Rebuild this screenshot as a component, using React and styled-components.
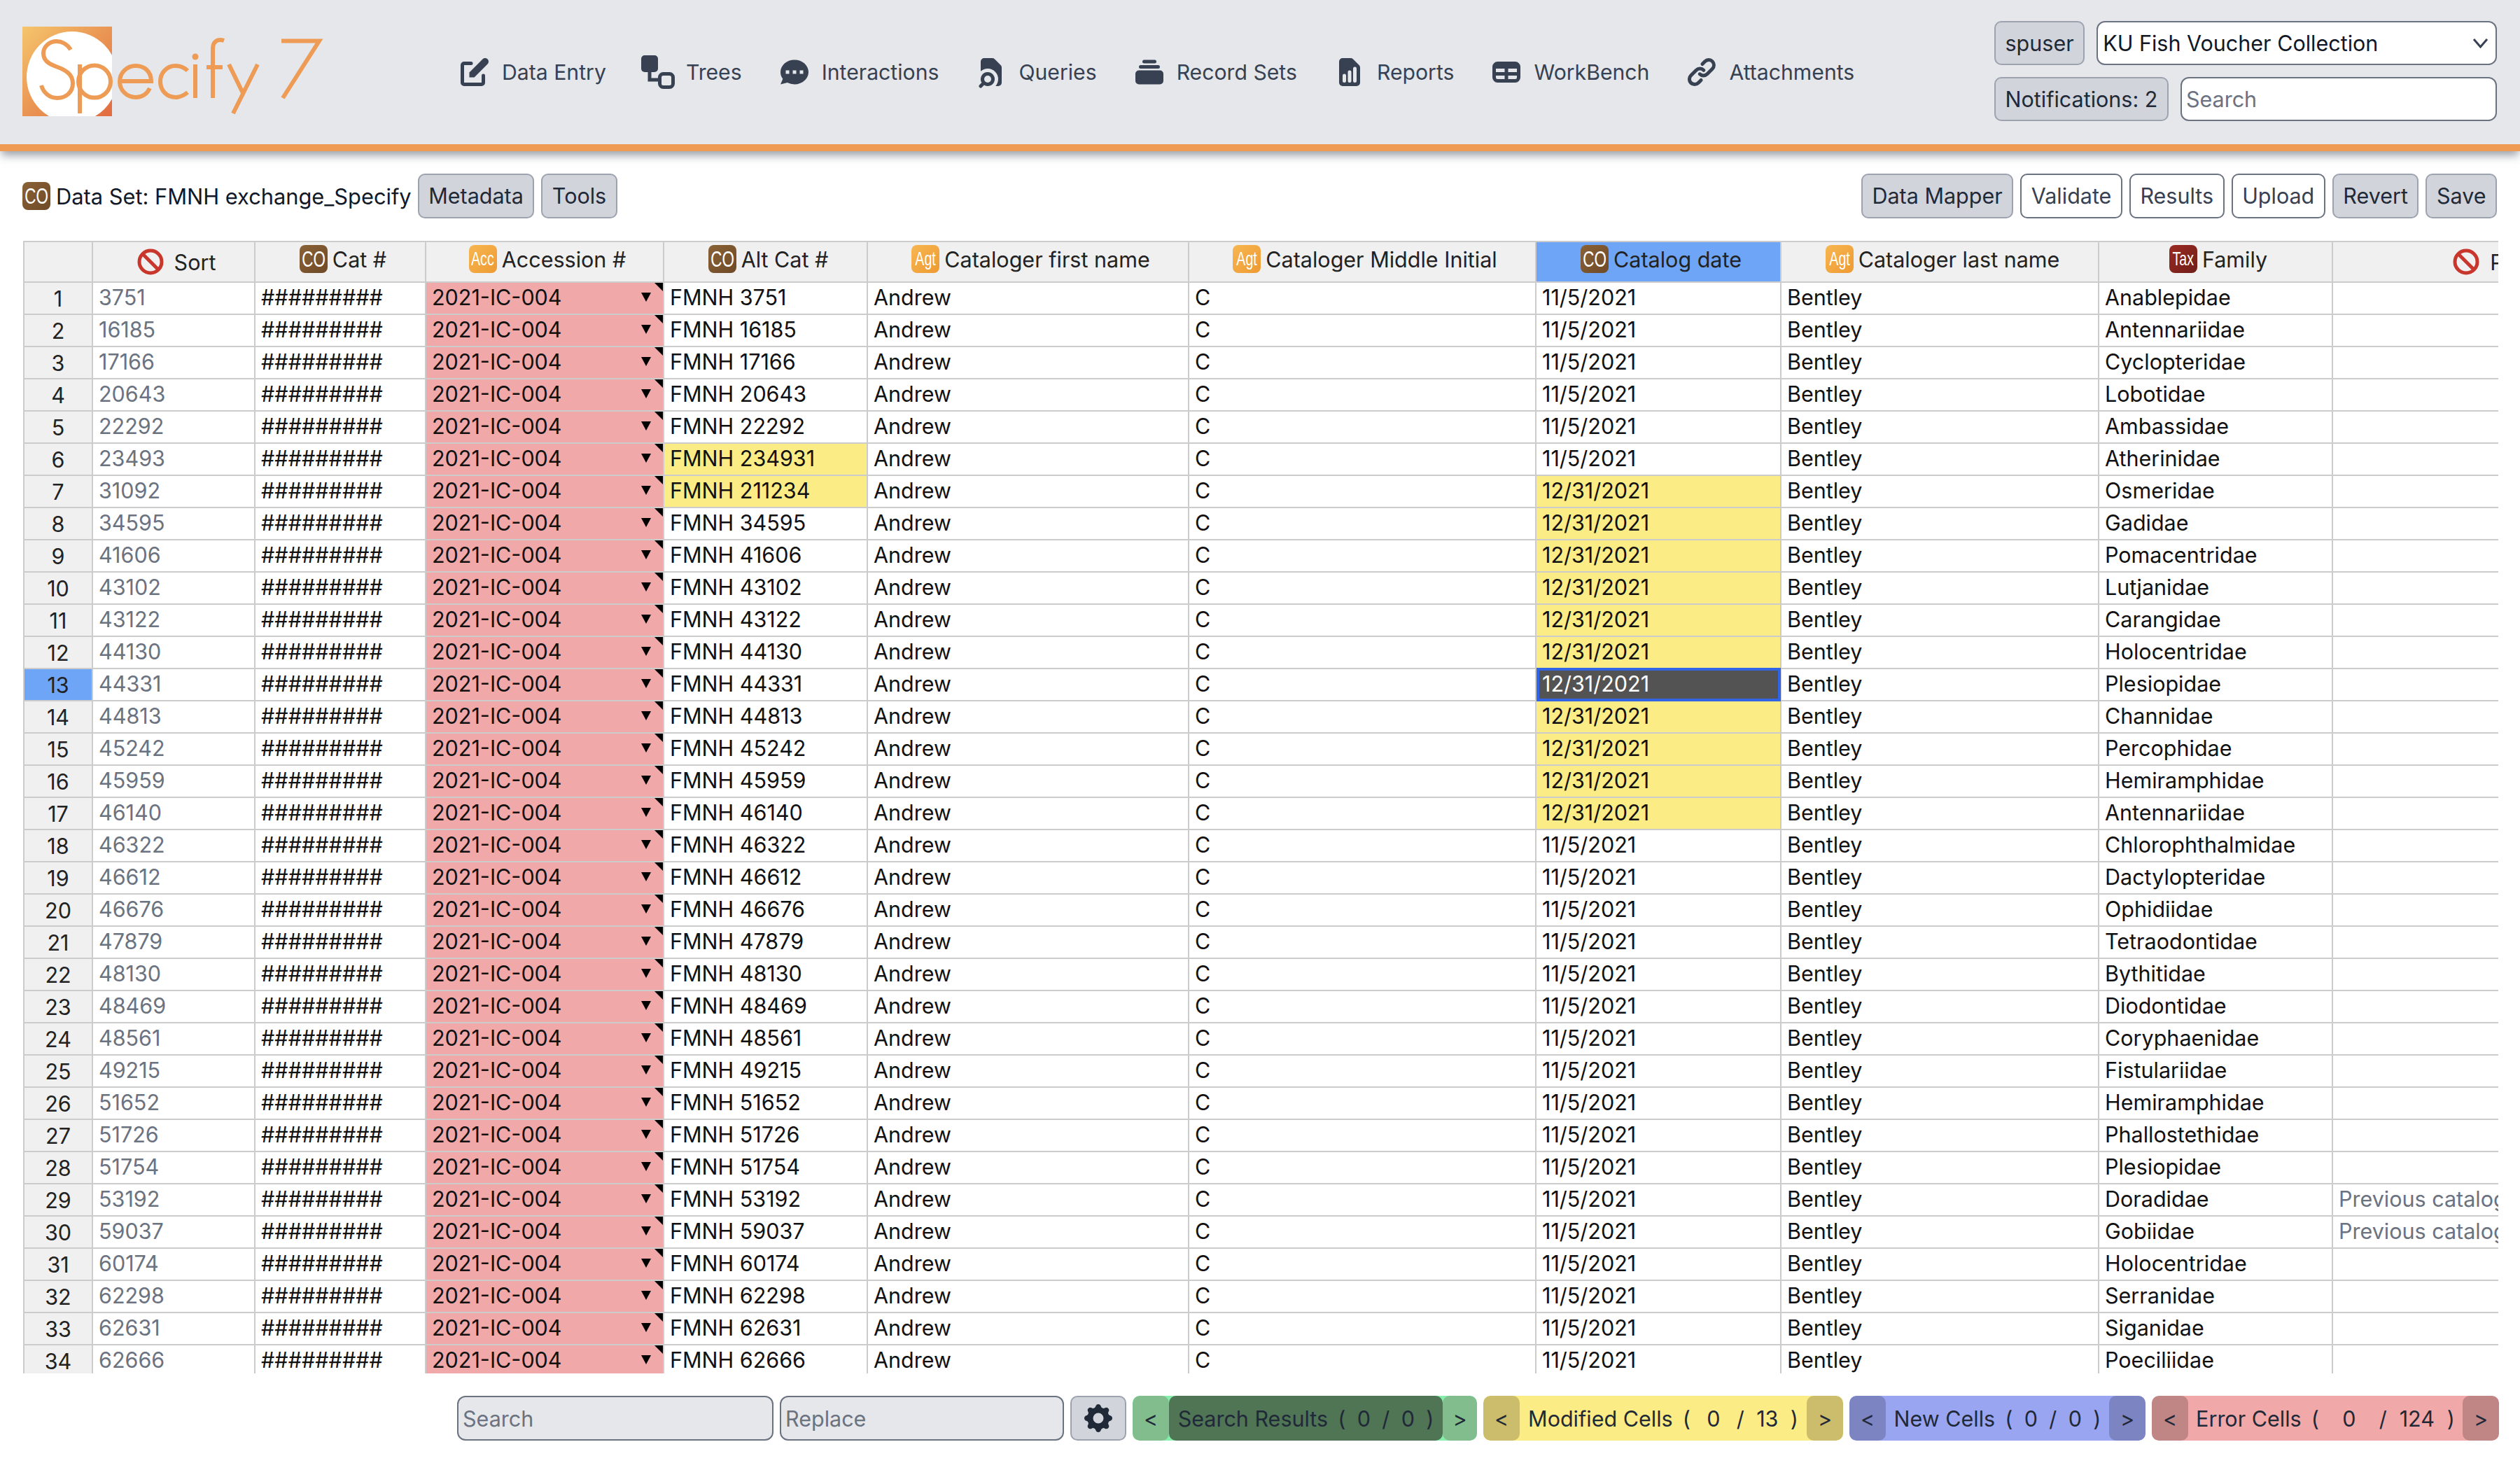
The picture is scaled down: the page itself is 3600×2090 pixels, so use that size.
import React from "react";
import styled, { createGlobalStyle } from "styled-components";

const FONT_SIZE = "30.5px";

const GlobalStyle = createGlobalStyle`
  html, body {
    margin: 0;
    padding: 0;
    background: #ffffff;
  }
  body {
    font-family: Inter, "Liberation Sans", sans-serif;
    font-size: ${FONT_SIZE};
    color: #111827;
  }
  * {
    box-sizing: border-box;
  }
`;

const Page = styled.div`
  width: 3600px;
  height: 2090px;
  display: flex;
  flex-direction: column;
  overflow: hidden;
`;

const Header = styled.header`
  position: relative;
  z-index: 2;
  flex: none;
  height: 216px;
  display: flex;
  align-items: center;
  padding: 0 33px 0 32px;
  background: #e5e7eb;
  border-bottom: 10px solid #f09b54;
  box-shadow: 0 8px 12px -2px rgba(55, 65, 81, 0.5);
`;

const Logo = styled.svg`
  flex: none;
  width: 440px;
  height: 128px;
  margin-top: -2px;
`;

const Nav = styled.nav`
  display: flex;
  align-items: center;
  gap: 50px;
  margin-left: 181px;
`;

const NavItem = styled.a`
  display: flex;
  align-items: center;
  gap: 14px;
  color: #374151;
  font-size: 30.2px;
  line-height: 44px;
  white-space: nowrap;

  svg {
    flex: none;
    width: 50px;
    height: 50px;
    fill: currentColor;
  }
`;

const UserBox = styled.div`
  flex: none;
  margin-left: auto;
  margin-top: -3px;
  width: 718px;
  display: flex;
  flex-direction: column;
  gap: 17px;
`;

const UserRow = styled.div`
  display: flex;
  gap: 17px;
  height: 63px;
`;

const Button = styled.button`
  flex: none;
  height: ${(p) => p.$height || 64}px;
  padding: 0 ${(p) => p.$pad || 13.5}px;
  border-radius: 10px;
  border: 2px solid ${(p) => (p.$outline ? "#6b7280" : "#9ca3af")};
  background: ${(p) => (p.$outline ? "#ffffff" : "#d1d5db")};
  color: ${(p) => (p.$outline ? "#374151" : "#1f2937")};
  font-family: inherit;
  font-size: ${FONT_SIZE};
  line-height: 40px;
  white-space: nowrap;
`;

const FakeSelect = styled.div`
  flex: 1;
  min-width: 0;
  display: flex;
  align-items: center;
  justify-content: space-between;
  padding: 0 10px 0 7px;
  background: #ffffff;
  border: 2px solid #6b7280;
  border-radius: 12px;
  color: #111827;
`;

const TextInput = styled.input`
  flex: ${(p) => (p.$width ? "none" : 1)};
  width: ${(p) => (p.$width ? `${p.$width}px` : 0)};
  min-width: 0;
  height: ${(p) => p.$height || 63}px;
  padding: 0 6px;
  font-family: inherit;
  font-size: ${FONT_SIZE};
  border: 2px solid #6b7280;
  border-radius: 12px;
  background: ${(p) => p.$bg || "#ffffff"};
  color: #111827;

  &::placeholder {
    color: #6b7280;
    opacity: 1;
  }
`;

const Toolbar = styled.div`
  flex: none;
  display: flex;
  align-items: center;
  gap: 10px;
  height: 64px;
  margin: 32px 33px 32px 32px;
`;

const Title = styled.h2`
  display: flex;
  align-items: center;
  gap: 8px;
  margin: 0 -1px 0 0;
  font-size: 30.8px;
  font-weight: 400;
  white-space: nowrap;
`;

const BadgeBox = styled.span`
  flex: none;
  display: inline-flex;
  align-items: center;
  justify-content: center;
  width: 40px;
  height: 40px;
  border-radius: 8px;
  overflow: hidden;
  background: ${(p) => p.$bg};
`;

const BadgeText = styled.span`
  display: inline-block;
  color: #ffffff;
  font-family: "Liberation Sans", sans-serif;
  font-size: ${(p) => p.$size}px;
  line-height: 1;
  transform: scaleX(0.7);
`;

const Spacer = styled.div`
  flex: 1;
`;

const Grid = styled.div`
  flex: none;
  height: 1618px;
  margin: 0 31px 0 33px;
  overflow: hidden;
  border-top: 2px solid #cccccc;
  border-left: 2px solid #cccccc;
`;

const COLUMNS = "98px 232px 244px 340px 291px 459px 496px 350px 454px 334px 514px";

const HeadRow = styled.div`
  display: grid;
  grid-template-columns: ${COLUMNS};
  width: max-content;
  height: 58px;
  border-bottom: 2px solid #cccccc;
`;

const Row = styled.div`
  display: grid;
  grid-template-columns: ${COLUMNS};
  width: max-content;
  height: 46px;
  border-bottom: 2px solid #cccccc;
`;

const HeadCell = styled.div`
  display: flex;
  align-items: center;
  justify-content: center;
  gap: ${(p) => (p.$plain ? 15 : 7)}px;
  padding: ${(p) => (p.$plain ? "0 0 0 8px" : "0 0 8px 8px")};
  background: ${(p) => (p.$active ? "#6fa5f6" : "#f0f0f0")};
  border-right: 2px solid #cccccc;
  color: #222222;
  font-size: ${FONT_SIZE};
  white-space: nowrap;
  overflow: hidden;
`;

const RowHead = styled.div`
  display: flex;
  align-items: center;
  justify-content: center;
  background: ${(p) => (p.$active ? "#6fa5f6" : "#f0f0f0")};
  border-right: 2px solid #cccccc;
  color: #222222;
  font-size: ${FONT_SIZE};
`;

const CELL_BG = {
  error: "#f1a8a8",
  modified: "#fbec85",
  selected: "#535353",
};

const Cell = styled.div`
  position: relative;
  padding: 0 8px;
  background: ${(p) => CELL_BG[p.$state] || "#ffffff"};
  border-right: 2px solid #cccccc;
  color: ${(p) =>
    p.$state === "selected" ? "#ffffff" : p.$muted ? "#6b7280" : "#111111"};
  font-size: ${FONT_SIZE};
  line-height: 42px;
  white-space: nowrap;
  overflow: ${(p) => (p.$state === "selected" ? "visible" : "hidden")};
`;

const SelectionFrame = styled.span`
  position: absolute;
  top: -2px;
  right: -1px;
  bottom: -2px;
  left: 0;
  border: 4px solid #3264e6;
`;

const CommentMark = styled.span`
  position: absolute;
  top: 0;
  right: 0;
  border-top: 12px solid #000000;
  border-left: 12px solid transparent;
`;

const ComboArrow = styled.span`
  position: absolute;
  top: 14px;
  right: 17px;
  border-top: 13px solid #000000;
  border-left: 7px solid transparent;
  border-right: 7px solid transparent;
`;

const Footer = styled.div`
  flex: none;
  display: flex;
  align-items: stretch;
  gap: 9px;
  height: 64px;
  margin: 32px 31px 0 653px;
`;

const IconButton = styled.button`
  flex: none;
  width: 80px;
  display: flex;
  align-items: center;
  justify-content: center;
  padding: 0;
  background: #d1d5db;
  border: 2px solid #9ca3af;
  border-radius: 10px;
  color: #1f2937;

  svg {
    width: 50px;
    height: 50px;
    fill: currentColor;
  }
`;

const NAV_PALETTE = {
  green: { peek: "#86efac", side: "#82be8d", mid: "#507555" },
  yellow: { peek: "#fbec85", side: "#cbbd6b", mid: "#fbec85" },
  blue: { peek: "#9aa5f2", side: "#7c84c1", mid: "#9aa5f2" },
  red: { peek: "#f1a8a8", side: "#c08585", mid: "#f1a8a8" },
};

const Navigator = styled.div`
  flex: none;
  width: ${(p) => p.$width}px;
  display: flex;
  border-radius: 10px;
  overflow: hidden;
  background: ${(p) => NAV_PALETTE[p.$tone].peek};
`;

const NavArrow = styled.button`
  flex: none;
  width: ${(p) => p.$width || 52}px;
  padding: 0;
  border: none;
  border-radius: 10px;
  background: ${(p) => NAV_PALETTE[p.$tone].side};
  color: #1f2937;
  font-family: inherit;
  font-size: ${FONT_SIZE};
`;

const NavLabel = styled.div`
  flex: 1;
  display: flex;
  align-items: center;
  justify-content: center;
  border-radius: 10px;
  background: ${(p) => NAV_PALETTE[p.$tone].mid};
  color: #1f2937;
  font-size: ${FONT_SIZE};
  white-space: nowrap;
`;

const LabelText = styled.span`
  margin-right: 14px;
`;

const Count = styled.span`
  display: inline-block;
  width: ${(p) => p.$width}px;
  text-align: center;
`;

const Badge = ({ bg, children }) => (
  <BadgeBox $bg={bg}>
    <BadgeText $size={children === "CO" ? 32 : 28}>{children}</BadgeText>
  </BadgeBox>
);

const NoSign = () => (
  <svg width="38" height="38" viewBox="0 0 38 38" fill="none" stroke="#c9362b" strokeWidth="5">
    <circle cx="19" cy="19" r="16" />
    <line x1="8" y1="8" x2="30" y2="30" />
  </svg>
);

const SearchCounter = ({ tone, width, left, right, label, current, total, countWidth }) => (
  <Navigator $tone={tone} $width={width}>
    <NavArrow $tone={tone} $width={left}>&lt;</NavArrow>
    <NavLabel $tone={tone}>
      <LabelText>{label}</LabelText>(<Count $width={countWidth}>{current}</Count>/
      <Count $width={countWidth}>{total}</Count>)
    </NavLabel>
    <NavArrow $tone={tone} $width={right}>&gt;</NavArrow>
  </Navigator>
);

const BROWN = "linear-gradient(135deg, #8a6236, #6f4a28)";
const ORANGE = "linear-gradient(135deg, #f7b650, #ee9a33)";
const DARK_RED = "linear-gradient(135deg, #9b2a22, #6f1d19)";

const TABLES = {
  CO: BROWN,
  Acc: ORANGE,
  Agt: ORANGE,
  Tax: DARK_RED,
};

const HEADERS = [
  { badge: "CO", label: "Cat #" },
  { badge: "Acc", label: "Accession #" },
  { badge: "CO", label: "Alt Cat #" },
  { badge: "Agt", label: "Cataloger first name" },
  { badge: "Agt", label: "Cataloger Middle Initial" },
  { badge: "CO", label: "Catalog date", active: true },
  { badge: "Agt", label: "Cataloger last name" },
  { badge: "Tax", label: "Family" },
];

const RECORDS = [
  [3751, "Anablepidae"],
  [16185, "Antennariidae"],
  [17166, "Cyclopteridae"],
  [20643, "Lobotidae"],
  [22292, "Ambassidae"],
  [23493, "Atherinidae", "FMNH 234931"],
  [31092, "Osmeridae", "FMNH 211234"],
  [34595, "Gadidae"],
  [41606, "Pomacentridae"],
  [43102, "Lutjanidae"],
  [43122, "Carangidae"],
  [44130, "Holocentridae"],
  [44331, "Plesiopidae"],
  [44813, "Channidae"],
  [45242, "Percophidae"],
  [45959, "Hemiramphidae"],
  [46140, "Antennariidae"],
  [46322, "Chlorophthalmidae"],
  [46612, "Dactylopteridae"],
  [46676, "Ophidiidae"],
  [47879, "Tetraodontidae"],
  [48130, "Bythitidae"],
  [48469, "Diodontidae"],
  [48561, "Coryphaenidae"],
  [49215, "Fistulariidae"],
  [51652, "Hemiramphidae"],
  [51726, "Phallostethidae"],
  [51754, "Plesiopidae"],
  [53192, "Doradidae"],
  [59037, "Gobiidae"],
  [60174, "Holocentridae"],
  [62298, "Serranidae"],
  [62631, "Siganidae"],
  [62666, "Poeciliidae"],
];

const App = () => {
  return (
    <Page>
      <GlobalStyle />
      <Header>
        <Logo viewBox="0 0 440 128">
          <defs>
            <linearGradient id="logoBg" x1="0" y1="0" x2="1" y2="1">
              <stop offset="0" stopColor="#f5c56c" />
              <stop offset="0.5" stopColor="#ea9553" />
              <stop offset="1" stopColor="#e26b41" />
            </linearGradient>
            <clipPath id="logoSquare">
              <rect width="128" height="128" />
            </clipPath>
          </defs>
          <rect width="128" height="128" fill="url(#logoBg)" />
          <circle cx="71" cy="72" r="65" fill="#fff" clipPath="url(#logoSquare)" />
          <g fill="none" stroke="#ee9b55" strokeWidth="6">
            <path d="M69 33C64 25 56 21 49 21C38 21 30 29 30 38C30 48 37 53 48 57C62 62 72 68 72 81C72 94 62 102 50 102C38 102 30 94 27 84" />
            <path d="M82 54V124" />
            <circle cx="103" cy="78.5" r="23" />
            <path d="M139 78H184C184 64 174 56 162 56C149 56 139 66 139 78.5C139 91 149 101 162 101C171 101 178 96 182 88" />
            <path d="M236 63C231 58 226 56 219 56C206 56 197 66 197 78.5C197 91 206 101 219 101C226 101 231 98 236 94" />
            <path d="M247 54V102" />
            <path d="M272 102V32C272 21 279 17 288 20" />
            <path d="M263 58H286" />
            <path d="M295 54L316 97M336 54L301 124" />
            <path d="M370 20.5H424L372 102" />
          </g>
          <circle cx="247" cy="43" r="4.5" fill="#ee9b55" />
        </Logo>
        <Nav>
          <NavItem>
            <svg viewBox="0 0 20 20">
              <path d="M17.414 2.586a2 2 0 00-2.828 0L7 10.172V13h2.828l7.586-7.586a2 2 0 000-2.828z" />
              <path fillRule="evenodd" d="M2 6a2 2 0 012-2h4a1 1 0 010 2H4v10h10v-4a1 1 0 112 0v4a2 2 0 01-2 2H4a2 2 0 01-2-2V6z" />
            </svg>
            Data Entry
          </NavItem>
          <NavItem>
            <svg viewBox="0 0 50 50">
              <rect x="0" y="1" width="24" height="24" rx="5" />
              <path d="M12 25V36H24" fill="none" stroke="currentColor" strokeWidth="5" />
              <rect x="26.5" y="27.5" width="19" height="19" rx="5" fill="none" stroke="currentColor" strokeWidth="5" />
            </svg>
            Trees
          </NavItem>
          <NavItem>
            <svg viewBox="0 0 20 20">
              <path fillRule="evenodd" d="M18 10c0 3.866-3.582 7-8 7a8.841 8.841 0 01-4.083-.98L2 17l1.338-3.123C2.493 12.767 2 11.434 2 10c0-3.866 3.582-7 8-7s8 3.134 8 7zM7 9H5v2h2V9zm8 0h-2v2h2V9zM9 9h2v2H9V9z" />
            </svg>
            Interactions
          </NavItem>
          <NavItem>
            <svg viewBox="0 0 20 20">
              <path d="M4 4a2 2 0 012-2h4.586A2 2 0 0112 2.586L15.414 6A2 2 0 0116 7.414V16a2 2 0 01-2 2h-1.528A6 6 0 004 9.528V4z" />
              <path fillRule="evenodd" d="M8 10a4 4 0 00-3.446 6.032l-1.261 1.26a1 1 0 101.414 1.415l1.261-1.261A4 4 0 108 10zm-2 4a2 2 0 114 0 2 2 0 01-4 0z" />
            </svg>
            Queries
          </NavItem>
          <NavItem>
            <svg viewBox="0 0 20 20">
              <path d="M7 3a1 1 0 000 2h6a1 1 0 100-2H7zM4 7a1 1 0 011-1h10a1 1 0 110 2H5a1 1 0 01-1-1zM2 11a2 2 0 012-2h12a2 2 0 012 2v4a2 2 0 01-2 2H4a2 2 0 01-2-2v-4z" />
            </svg>
            Record Sets
          </NavItem>
          <NavItem>
            <svg viewBox="0 0 20 20">
              <path fillRule="evenodd" d="M6 2a2 2 0 00-2 2v12a2 2 0 002 2h8a2 2 0 002-2V7.414A2 2 0 0015.414 6L12 2.586A2 2 0 0010.586 2H6zm2 10a1 1 0 10-2 0v3a1 1 0 102 0v-3zm2-3a1 1 0 011 1v5a1 1 0 11-2 0v-5a1 1 0 011-1zm4-1a1 1 0 10-2 0v7a1 1 0 102 0V8z" />
            </svg>
            Reports
          </NavItem>
          <NavItem>
            <svg viewBox="0 0 20 20">
              <path fillRule="evenodd" d="M5 4a3 3 0 00-3 3v6a3 3 0 003 3h10a3 3 0 003-3V7a3 3 0 00-3-3H5zm-1 9v-1h5v2H5a1 1 0 01-1-1zm7 1h4a1 1 0 001-1v-1h-5v2zm0-4h5V8h-5v2zM9 8H4v2h5V8z" />
            </svg>
            WorkBench
          </NavItem>
          <NavItem>
            <svg viewBox="0 0 20 20">
              <path fillRule="evenodd" d="M12.586 4.586a2 2 0 112.828 2.828l-3 3a2 2 0 01-2.828 0 1 1 0 00-1.414 1.414 4 4 0 005.656 0l3-3a4 4 0 00-5.656-5.656l-1.5 1.5a1 1 0 101.414 1.414l1.5-1.5zm-5 5a2 2 0 012.828 0 1 1 0 101.414-1.414 4 4 0 00-5.656 0l-3 3a4 4 0 105.656 5.656l1.5-1.5a1 1 0 10-1.414-1.414l-1.5 1.5a2 2 0 11-2.828-2.828l3-3z" />
            </svg>
            Attachments
          </NavItem>
        </Nav>
        <UserBox>
          <UserRow>
            <Button $height={63}>spuser</Button>
            <FakeSelect>
              KU Fish Voucher Collection
              <svg width="23" height="14" viewBox="0 0 23 14" fill="none" stroke="#374151" strokeWidth="3">
                <path d="M2 1l9.5 11L21 1" />
              </svg>
            </FakeSelect>
          </UserRow>
          <UserRow>
            <Button $height={63}>Notifications: 2</Button>
            <TextInput placeholder="Search" />
          </UserRow>
        </UserBox>
      </Header>

      <Toolbar>
        <Title>
          <Badge bg={BROWN}>CO</Badge>
          Data Set: FMNH exchange_Specify
        </Title>
        <Button>Metadata</Button>
        <Button>Tools</Button>
        <Spacer />
        <Button>Data Mapper</Button>
        <Button $outline>Validate</Button>
        <Button $outline>Results</Button>
        <Button $outline>Upload</Button>
        <Button>Revert</Button>
        <Button>Save</Button>
      </Toolbar>

      <Grid>
        <HeadRow>
          <HeadCell />
          <HeadCell $plain>
            <NoSign />
            Sort
          </HeadCell>
          {HEADERS.map((h) => (
            <HeadCell key={h.label} $active={h.active}>
              <Badge bg={TABLES[h.badge]}>{h.badge}</Badge>
              {h.label}
            </HeadCell>
          ))}
          <HeadCell $plain>
            <NoSign />
            Previous
          </HeadCell>
        </HeadRow>
        {RECORDS.map(([id, family, altCat], i) => {
          const num = i + 1;
          const changedDate = num >= 7 && num <= 17;
          const selected = num === 13;
          return (
            <Row key={id}>
              <RowHead $active={selected}>{num}</RowHead>
              <Cell $muted>{id}</Cell>
              <Cell>#########</Cell>
              <Cell $state="error">
                2021-IC-004
                <ComboArrow />
                <CommentMark />
              </Cell>
              <Cell $state={altCat ? "modified" : undefined}>{altCat || `FMNH ${id}`}</Cell>
              <Cell>Andrew</Cell>
              <Cell>C</Cell>
              <Cell $state={selected ? "selected" : changedDate ? "modified" : undefined}>
                {changedDate ? "12/31/2021" : "11/5/2021"}
                {selected && <SelectionFrame />}
              </Cell>
              <Cell>Bentley</Cell>
              <Cell>{family}</Cell>
              <Cell $muted>{num === 29 || num === 30 ? "Previous catalog no." : ""}</Cell>
            </Row>
          );
        })}
      </Grid>

      <Footer>
        <TextInput $width={452} $height={64} $bg="#e5e7eb" placeholder="Search" />
        <TextInput $width={406} $height={64} $bg="#e5e7eb" placeholder="Replace" />
        <IconButton>
          <svg viewBox="0 0 20 20">
            <path fillRule="evenodd" d="M11.49 3.17c-.38-1.56-2.6-1.56-2.98 0a1.532 1.532 0 01-2.286.948c-1.372-.836-2.942.734-2.106 2.106.54.886.061 2.042-.947 2.287-1.561.379-1.561 2.6 0 2.978a1.532 1.532 0 01.947 2.287c-.836 1.372.734 2.942 2.106 2.106a1.532 1.532 0 012.287.947c.379 1.561 2.6 1.561 2.978 0a1.533 1.533 0 012.287-.947c1.372.836 2.942-.734 2.106-2.106a1.533 1.533 0 01.947-2.287c1.561-.379 1.561-2.6 0-2.978a1.532 1.532 0 01-.947-2.287c.836-1.372-.734-2.942-2.106-2.106a1.532 1.532 0 01-2.287-.947zM10 13a3 3 0 100-6 3 3 0 000 6z" />
          </svg>
        </IconButton>
        <SearchCounter tone="green" width={492} left={52} right={49} label="Search Results" current={0} total={0} countWidth={52} />
        <SearchCounter tone="yellow" width={514} left={52} right={52} label="Modified Cells" current={0} total={13} countWidth={66} />
        <SearchCounter tone="blue" width={423} left={52} right={52} label="New Cells" current={0} total={0} countWidth={52} />
        <SearchCounter tone="red" width={496} left={52} right={52} label="Error Cells" current={0} total={124} countWidth={86} />
      </Footer>
    </Page>
  );
};

export default App;
